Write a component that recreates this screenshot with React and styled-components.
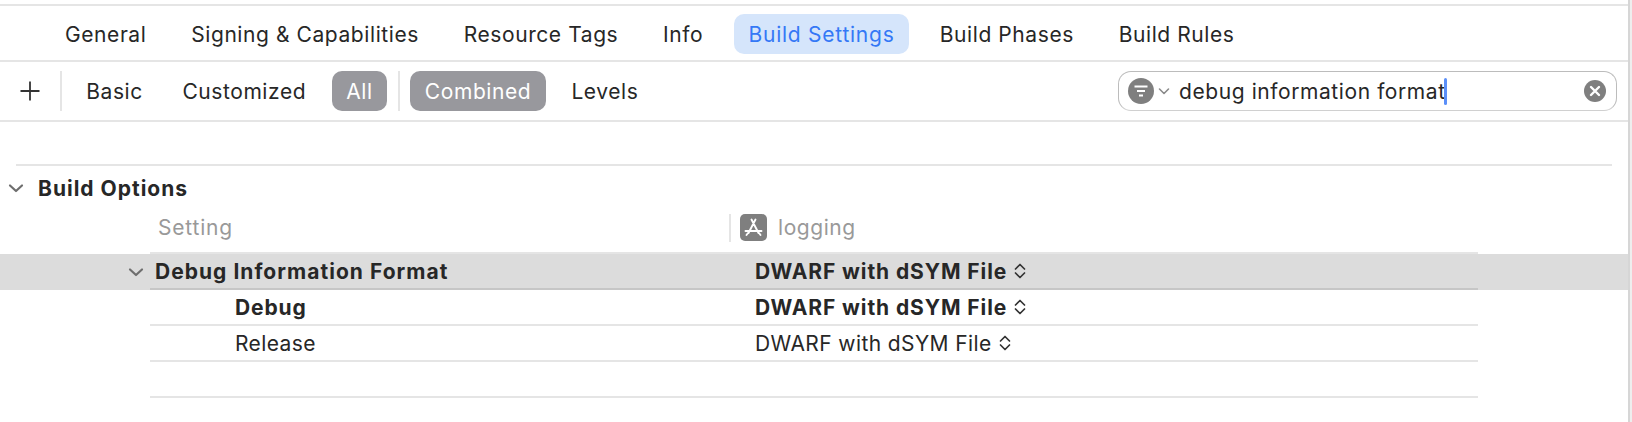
import React from "react";
import styled, { createGlobalStyle } from "styled-components";

const GlobalStyle = createGlobalStyle`
  html, body {
    margin: 0;
    background: #eeeeee;
    font-family: Inter, "Liberation Sans", sans-serif;
    color: #272727;
  }
`;

const Page = styled.div`
  width: 1630px;
  height: 422px;
  box-sizing: border-box;
  padding-top: 4px;
  background: #fff;
  border-right: 2px solid #d6d6d6;
  overflow: hidden;
  font-size: 21px;
  letter-spacing: 0.58px;
`;

const TabBar = styled.div`
  display: flex;
  gap: 16.8px;
  height: 54px;
  padding-left: 51px;
  align-items: flex-end;
  border-top: 2px solid #e5e5e5;
  border-bottom: 2px solid #e5e5e5;
`;

const Tab = styled.div`
  height: 40px;
  margin-bottom: 6px;
  padding: 0 ${(p) => (p.$active ? "14.5px" : "14px")};
  display: flex;
  align-items: center;
  border-radius: 10px;
  letter-spacing: ${(p) => (p.$active ? "0.75px" : "0.58px")};
  color: ${(p) => (p.$active ? "#3478f6" : "#272727")};
  background: ${(p) => (p.$active ? "#d5e5fb" : "transparent")};
`;

const Toolbar = styled.div`
  display: flex;
  align-items: center;
  gap: 11.6px;
  height: 58px;
  padding: 0 11px 0 10px;
  border-bottom: 2px solid #e5e5e5;
`;

const PlusButton = styled.div`
  width: 39px;
  height: 40px;
  display: flex;
  align-items: center;
  justify-content: center;
`;

const ToolDivider = styled.div`
  width: 2px;
  height: 40px;
  margin: 0 -1px;
  background: #e5e5e5;
`;

const Filter = styled.div`
  height: 40px;
  padding: 0 ${(p) => (p.$on ? "14.5px" : "14px")};
  display: flex;
  align-items: center;
  border-radius: 10px;
  color: ${(p) => (p.$on ? "#fff" : "#272727")};
  background: ${(p) => (p.$on ? "#98989d" : "transparent")};
`;

const SearchBox = styled.div`
  margin-left: auto;
  width: 499px;
  height: 40px;
  box-sizing: border-box;
  display: flex;
  align-items: center;
  padding: 0 10px 0 9px;
  border: 1px solid #bcbcbc;
  border-bottom-color: #d0d0d0;
  border-radius: 13px;
`;

const FilterChevron = styled.svg`
  margin-left: 4px;
`;

const SearchText = styled.div`
  display: flex;
  align-items: center;
  margin-left: 9px;
  padding-top: 1px;
`;

const Caret = styled.span`
  width: 3px;
  height: 27px;
  margin-left: -2px;
  border-radius: 2px;
  background: #5b8ff9;
`;

const ClearIcon = styled.div`
  margin-left: auto;
  display: flex;
`;

const SectionWrap = styled.div`
  padding-top: 42px;
`;

const SectionRule = styled.div`
  height: 2px;
  margin: 0 16px 0 16px;
  background: #e5e5e5;
`;

const SectionHeader = styled.div`
  margin-left: 8px;
  height: 44px;
  display: flex;
  align-items: center;
  gap: 14px;
  font-weight: 700;
  letter-spacing: 1px;
`;

const ColumnHeader = styled.div`
  display: grid;
  grid-template-columns: 579px 1fr;
  width: 1328px;
  height: 38px;
  margin-left: 150px;
  padding-top: 4px;
  border-bottom: 2px solid #e5e5e5;
  color: #999;
`;

const HeaderCell = styled.div`
  height: 28px;
  box-sizing: border-box;
  padding-bottom: 2px;
  display: flex;
  align-items: center;
  padding-left: ${(p) => p.$indent || 0}px;
  letter-spacing: 0.8px;
`;

const TargetCell = styled(HeaderCell)`
  border-left: 2px solid #e5e5e5;
  padding-left: 9px;
  gap: 11px;
  letter-spacing: 0.55px;
`;

const GroupRow = styled.div`
  display: flex;
  height: 36px;
  background: #dcdcdc;
`;

const Disclosure = styled.div`
  flex: 0 0 150px;
  box-sizing: border-box;
  height: 36px;
  padding-left: 128px;
  display: flex;
  align-items: center;
`;

const Row = styled.div`
  display: grid;
  grid-template-columns: 605px 1fr;
  align-items: center;
  width: 1328px;
  height: 34px;
  border-bottom: 2px solid ${(p) => (p.$strong ? "#c6c6c6" : "#e5e5e5")};
  margin-left: ${(p) => (p.$inset ? "150px" : "0")};
  font-weight: ${(p) => (p.$bold ? 700 : 400)};
  letter-spacing: ${(p) => (p.$bold ? "0.9px" : "0.4px")};
`;

const NameCell = styled.div`
  padding-left: ${(p) => p.$indent}px;
`;

const GroupName = styled(NameCell)`
  letter-spacing: 1.03px;
`;

const ValueCell = styled.div`
  display: flex;
  align-items: center;
  gap: 7px;
`;

const Chevron = () => (
  <svg width="16" height="16" viewBox="0 0 16 16" fill="none">
    <path d="M2 5.5 L8 11 L14 5.5" stroke="#6e6e6e" strokeWidth="2.2" strokeLinecap="round" strokeLinejoin="round" />
  </svg>
);

const Stepper = () => (
  <svg width="12" height="16" viewBox="0 0 12 16" fill="none">
    <path d="M1.5 6 L6 1.5 L10.5 6 M1.5 10 L6 14.5 L10.5 10" stroke="#333" strokeWidth="1.7" strokeLinecap="round" strokeLinejoin="round" />
  </svg>
);

const Value = () => (
  <ValueCell>
    DWARF with dSYM File
    <Stepper />
  </ValueCell>
);

export default function App() {
  return (
    <Page>
      <GlobalStyle />
      <TabBar>
        <Tab>General</Tab>
        <Tab>Signing &amp; Capabilities</Tab>
        <Tab>Resource Tags</Tab>
        <Tab>Info</Tab>
        <Tab $active>Build Settings</Tab>
        <Tab>Build Phases</Tab>
        <Tab>Build Rules</Tab>
      </TabBar>

      <Toolbar>
        <PlusButton>
          <svg width="22" height="22" viewBox="0 0 22 22" fill="none">
            <path d="M11 1.5 V20.5 M1.5 11 H20.5" stroke="#333" strokeWidth="1.8" />
          </svg>
        </PlusButton>
        <ToolDivider />
        <Filter>Basic</Filter>
        <Filter>Customized</Filter>
        <Filter $on>All</Filter>
        <ToolDivider />
        <Filter $on>Combined</Filter>
        <Filter>Levels</Filter>
        <SearchBox>
          <svg width="26" height="26" viewBox="0 0 26 26" fill="none">
            <circle cx="13" cy="13" r="13" fill="#7f7f7f" />
            <path d="M6.5 8.5 H19.5 M9 13 H17 M11 17.5 H15" stroke="#fff" strokeWidth="2" />
          </svg>
          <FilterChevron width="12" height="12" viewBox="0 0 12 12" fill="none">
            <path d="M1.5 4 L6 8.5 L10.5 4" stroke="#8a8a8a" strokeWidth="1.6" strokeLinecap="round" strokeLinejoin="round" />
          </FilterChevron>
          <SearchText>
            debug information format
            <Caret />
          </SearchText>
          <ClearIcon>
            <svg width="22" height="22" viewBox="0 0 22 22" fill="none">
              <circle cx="11" cy="11" r="11" fill="#7f7f7f" />
              <path d="M7 7 L15 15 M15 7 L7 15" stroke="#fff" strokeWidth="2.4" strokeLinecap="round" />
            </svg>
          </ClearIcon>
        </SearchBox>
      </Toolbar>

      <SectionWrap>
        <SectionRule />
        <SectionHeader>
          <Chevron />
          Build Options
        </SectionHeader>
        <ColumnHeader>
          <HeaderCell $indent={8}>Setting</HeaderCell>
          <TargetCell>
            <svg width="27" height="27" viewBox="0 0 27 27" fill="none">
              <rect width="27" height="27" rx="5" fill="#7f7f7f" />
              <path d="M11.5 5.5 L18.5 19 M15.5 5.5 L8.5 19 M5.5 17 H21.5 M6.5 21 L8 19 M20.5 21 L19 19" stroke="#fff" strokeWidth="1.9" strokeLinecap="round" />
            </svg>
            logging
          </TargetCell>
        </ColumnHeader>
        <GroupRow>
          <Disclosure>
            <Chevron />
          </Disclosure>
          <Row $strong $bold>
            <GroupName $indent={5}>Debug Information Format</GroupName>
            <Value />
          </Row>
        </GroupRow>
        <Row $inset $bold>
          <NameCell $indent={85}>Debug</NameCell>
          <Value />
        </Row>
        <Row $inset>
          <NameCell $indent={85}>Release</NameCell>
          <Value />
        </Row>
        <Row $inset />
      </SectionWrap>
    </Page>
  );
}
